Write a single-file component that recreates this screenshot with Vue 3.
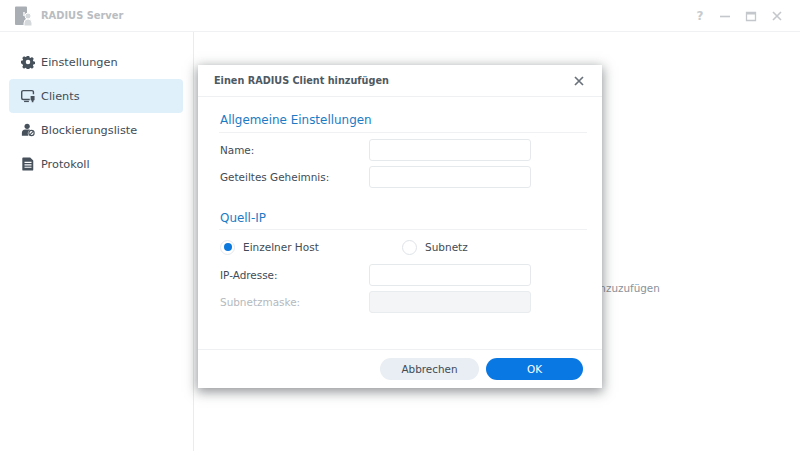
<script setup>
const nav = [
  { label: 'Einstellungen', icon: 'gear' },
  { label: 'Clients', icon: 'monitor', active: true },
  { label: 'Blockierungsliste', icon: 'user' },
  { label: 'Protokoll', icon: 'doc' },
]
</script>

<template>
  <div class="app">
    <header class="topbar">
      <div class="brand">
        <svg class="logo" width="20" height="20" viewBox="0 0 20 20">
          <path d="M1 1.5a1 1 0 0 1 1-1h10a1 1 0 0 1 1 1V18a1 1 0 0 1-1 1H2a1 1 0 0 1-1-1z" fill="#a9aeb4" />
          <rect x="9" y="6" width="2" height="4" fill="#e4e6e8" />
          <circle cx="14" cy="10" r="3" fill="#d5d8db" stroke="#fff" />
          <path d="M10 20v-3a4 4 0 0 1 8 0v3z" fill="#d5d8db" stroke="#fff" />
        </svg>
        <span class="app-title">RADIUS Server</span>
      </div>
      <div class="win-btns">
        <span class="help">?</span>
        <svg width="12" height="12" viewBox="0 0 12 12"><path d="M1 6.5h10" stroke="#c4c7cb" stroke-width="1.6" /></svg>
        <svg width="12" height="12" viewBox="0 0 12 12"><path d="M1.5 2.5h9v8h-9z" fill="none" stroke="#c4c7cb" stroke-width="1.3" /><path d="M1.5 3.5h9" stroke="#c4c7cb" stroke-width="2" /></svg>
        <svg width="12" height="12" viewBox="0 0 12 12"><path d="M2 2l8 8M10 2l-8 8" stroke="#c4c7cb" stroke-width="1.6" /></svg>
      </div>
    </header>

    <div class="body">
      <aside class="sidebar">
        <div v-for="item in nav" :key="item.label" class="nav-item" :class="{ active: item.active }">
          <svg class="nav-icon" width="14" height="14" viewBox="0 0 16 16">
            <template v-if="item.icon === 'gear'">
              <path fill="#46515c" fill-rule="evenodd" d="M6.6 1h2.8l.4 1.9 1.1.5 1.7-1 2 2-1 1.7.5 1.1 1.9.4v2.8l-1.9.4-.5 1.1 1 1.7-2 2-1.7-1-1.1.5-.4 1.9H6.6l-.4-1.9-1.1-.5-1.7 1-2-2 1-1.7-.5-1.1L0 9.4V6.6l1.9-.4.5-1.1-1-1.700 2-2 1.700 1 1.100-.5zM8 5.400a2.600 2.600 0 1 0 0 5.200 2.600 2.600 0 0 0 0-5.200z" />
            </template>
            <template v-else-if="item.icon === 'monitor'">
              <path fill="none" stroke="#46515c" stroke-width="1.600" d="M10 12H2.500A1.700 1.700 0 0 1 .8 10.300V3.500A1.700 1.700 0 0 1 2.500 1.800h10a1.700 1.700 0 0 1 1.700 1.700V6" />
              <path d="M3.500 14.200H9" stroke="#46515c" stroke-width="1.500" />
              <path d="M11 8h4.500v4.500l-1.300 1v1.700h-1.900v-1.700L11 12.500z" fill="#46515c" />
            </template>
            <template v-else-if="item.icon === 'user'">
              <circle cx="7" cy="3.800" r="3" fill="#46515c" />
              <path d="M1 14.500v-3a4 4 0 0 1 4-4h4a4 4 0 0 1 1.500.3 4.500 4.500 0 0 0-2 6.700z" fill="#46515c" />
              <circle cx="12" cy="11.500" r="3" fill="#fff" stroke="#46515c" stroke-width="1.300" />
              <path d="M10 13.500l4-4" stroke="#46515c" stroke-width="1.200" />
            </template>
            <template v-else>
              <path fill="#46515c" fill-rule="evenodd" d="M2.500.500h8l3.500 3.500v10.500a1 1 0 0 1-1 1H2.500a1 1 0 0 1-1-1v-13a1 1 0 0 1 1-1zM4 5.500v1.300h8V5.500zM4 8.300v1.300h8V8.300zM4 11.100v1.300h8v-1.300z" />
            </template>
          </svg>
          <span class="nav-label">{{ item.label }}</span>
        </div>
      </aside>
      <main class="main">
        <p class="empty">Noch keine Clients vorhanden. Klicken, um einen hinzuzufügen</p>
      </main>
    </div>

    <section class="dialog">
      <div class="dlg-head">
        <span class="dlg-title">Einen RADIUS Client hinzufügen</span>
        <svg width="12" height="12" viewBox="0 0 12 12"><path d="M2 2l8 8M10 2l-8 8" stroke="#69727b" stroke-width="1.700" /></svg>
      </div>

      <div class="dlg-body">
        <h2 class="sec first">Allgemeine Einstellungen</h2>
        <div class="rows">
          <div class="row"><label>Name:</label><input type="text" /></div>
          <div class="row"><label>Geteiltes Geheimnis:</label><input type="text" /></div>
        </div>

        <h2 class="sec second">Quell-IP</h2>
        <div class="radios">
          <div class="radio-opt"><span class="radio on"></span><span>Einzelner Host</span></div>
          <div class="radio-opt"><span class="radio"></span><span>Subnetz</span></div>
        </div>
        <div class="rows">
          <div class="row"><label>IP-Adresse:</label><input type="text" /></div>
          <div class="row disabled"><label>Subnetzmaske:</label><input type="text" disabled /></div>
        </div>
      </div>

      <div class="dlg-foot">
        <button class="btn cancel">Abbrechen</button>
        <button class="btn ok">OK</button>
      </div>
    </section>
  </div>
</template>

<style>
html, body { margin: 0; background: #fff; }
</style>

<style scoped>
.app {
  position: relative;
  width: 800px;
  height: 451px;
  overflow: hidden;
  background: #fff;
  font-family: "DejaVu Sans", sans-serif;
  font-size: 11px;
  color: #414b55;
  display: flex;
  flex-direction: column;
}
.topbar {
  height: 32px;
  box-sizing: border-box;
  flex: none;
  border-bottom: 1px solid #f0f1f2;
  display: flex;
  align-items: center;
  justify-content: space-between;
  padding: 0 17px 0 14px;
}
.brand { display: flex; align-items: center; gap: 7px; }
.logo { display: block; }
.app-title { font-size: 9.900px; font-weight: 700; color: #b9bdc1; }
.win-btns { display: flex; align-items: center; gap: 14px; }
.help { width: 12px; text-align: center; font-size: 12px; font-weight: 700; color: #c8cbce; position: relative; left: 1px; }
.win-btns svg { display: block; }
.body { flex: 1; display: flex; min-height: 0; }
.sidebar {
  width: 194px;
  box-sizing: border-box;
  flex: none;
  border-right: 1px solid #e9ebed;
  padding: 13px 10px 0 9px;
}
.nav-item {
  height: 34px;
  display: flex;
  align-items: center;
  gap: 6px;
  padding-left: 12px;
  border-radius: 4px;
  font-size: 11.300px;
}
.nav-label { padding-top: 1px; }
.nav-item.active { background: #e0f0fb; }
.nav-icon { flex: none; }
.main {
  flex: 1;
  display: flex;
  align-items: center;
  justify-content: center;
  padding: 93px 2px 0 0;
}
.empty {
  margin: 0;
  font-size: 10.400px;
  color: #8b9298;
  white-space: nowrap;
}
.dialog {
  position: absolute;
  left: 198px;
  top: 65px;
  width: 404px;
  height: 323px;
  background: #fff;
  box-shadow: 0 3px 11px 1px rgba(40, 45, 50, 0.5);
  display: flex;
  flex-direction: column;
}
.dlg-head {
  height: 32px;
  box-sizing: border-box;
  flex: none;
  border-bottom: 1px solid #eff0f2;
  display: flex;
  align-items: center;
  justify-content: space-between;
  padding: 0 17px 0 16px;
}
.dlg-title { font-size: 9.700px; font-weight: 700; color: #4f5962; }
.dlg-head svg { display: block; }
.dlg-body { flex: 1; padding: 0 15px 0 21px; }
.sec {
  margin: 0 0 6px;
  padding: 0 0 3px 1px;
  font-size: 11.950px;
  font-weight: 400;
  color: #1c7bc4;
  border-bottom: 1px solid #f0f1f3;
  line-height: 17px;
}
.sec.first { margin-top: 15px; }
.sec.second { margin-top: 22px; padding-bottom: 2px; }
.rows { display: flex; flex-direction: column; gap: 5px; }
.row { display: flex; align-items: center; height: 22px; padding-left: 1px; }
.row label { width: 149px; flex: none; font-size: 10.450px; color: #414b55; }
input {
  width: 162px;
  height: 22px;
  box-sizing: border-box;
  flex: none;
  margin: 0;
  padding: 0;
  border: 1px solid #e6e9ec;
  border-radius: 3px;
  background: #fff;
  outline: none;
}
.row.disabled label { color: #b4b9be; }
input:disabled { background: #f3f5f7; border-color: #e9ecef; }
.radios { display: flex; height: 22px; align-items: center; margin: 0 0 6px; padding-left: 1px; }
.radio-opt { width: 182px; display: flex; align-items: center; gap: 8px; font-size: 10.500px; }
.radio {
  width: 15px;
  height: 15px;
  box-sizing: border-box;
  border: 1px solid #dfe3e7;
  border-radius: 50%;
  background: #fff;
  display: block;
  flex: none;
}
.radio.on { position: relative; border-color: #e4e9ed; }
.radio.on::after {
  content: "";
  position: absolute;
  left: 2.500px;
  top: 2.500px;
  width: 8px;
  height: 8px;
  border-radius: 50%;
  background: #0a78dd;
}
.dlg-foot {
  height: 39px;
  box-sizing: border-box;
  flex: none;
  border-top: 1px solid #eff0f2;
  display: flex;
  justify-content: flex-end;
  align-items: flex-start;
  gap: 7px;
  padding: 8px 19px 0 0;
}
.btn {
  height: 22px;
  border: 0;
  padding: 0;
  border-radius: 11px;
  font-family: inherit;
  font-size: 10.400px;
}
.cancel { width: 99px; background: #e8eef3; color: #414b55; }
.ok { width: 97px; background: #0a78e2; color: #fff; }
</style>
